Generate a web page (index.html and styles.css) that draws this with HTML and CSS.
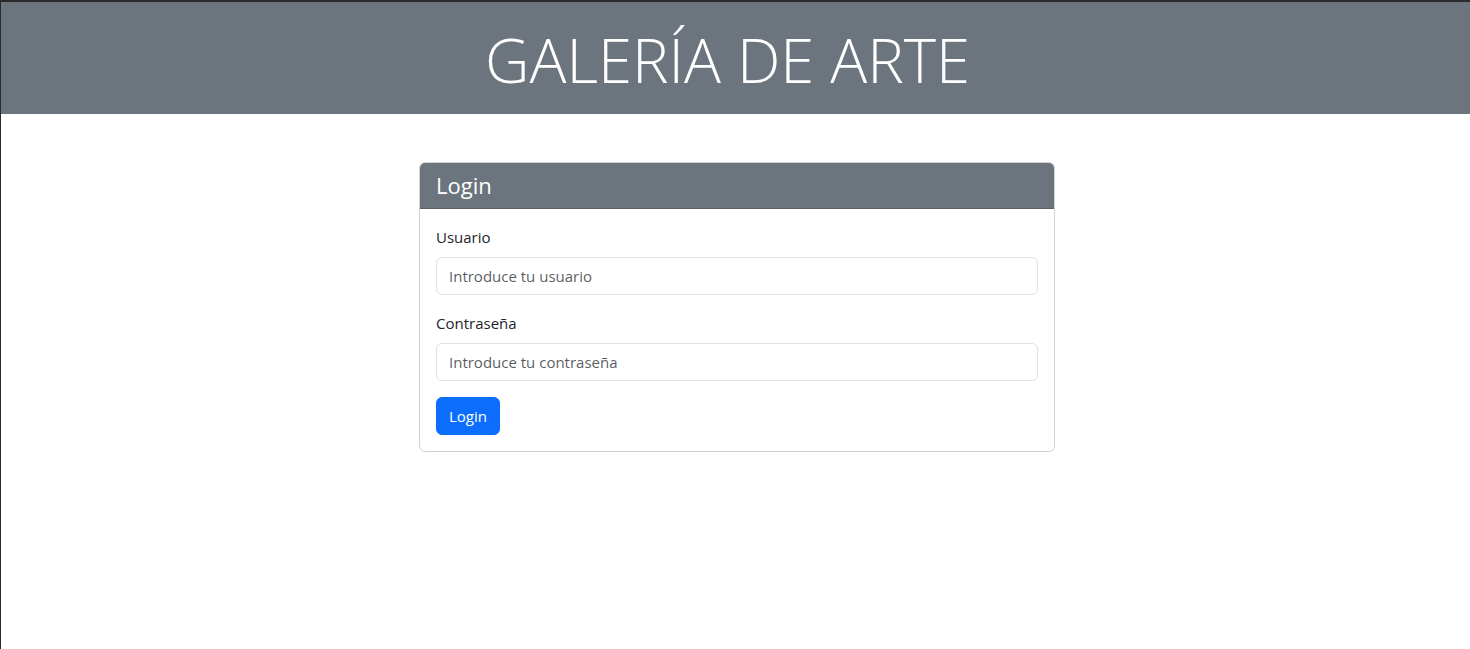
FILE: index.html
```html
<!DOCTYPE html>
<html lang="es">
<head>
<meta charset="utf-8">
<title>Galería de Arte</title>
<link rel="stylesheet" href="styles.css">
</head>
<body>
<div class="frame">
  <header class="banner">
    <h1 class="title">GALERÍA DE ARTE</h1>
  </header>
  <main class="main">
    <section class="card">
      <div class="card-header">
        <h3 class="card-title">Login</h3>
      </div>
      <form class="card-body">
        <div class="field">
          <label class="label" for="u">Usuario</label>
          <input class="input" id="u" type="text" placeholder="Introduce tu usuario">
        </div>
        <div class="field">
          <label class="label" for="p">Contraseña</label>
          <input class="input" id="p" type="password" placeholder="Introduce tu contraseña">
        </div>
        <button class="btn" type="button">Login</button>
      </form>
    </section>
  </main>
</div>
</body>
</html>
```
FILE: styles.css
```css
* { box-sizing: border-box; }
html, body { margin: 0; padding: 0; height: 100%; }
body {
  background: #2b2b2e;
  font-family: "Open Sans", "Liberation Sans", sans-serif;
  color: #212529;
}
.frame {
  margin: 2px 0 0 1px;
  background: #fff;
  height: calc(100% - 2px);
}
.banner {
  background: #6c757d;
  height: 112px;
  display: flex;
  align-items: center;
  justify-content: center;
  padding-right: 16px;
}
.title {
  margin: 0;
  color: #fff;
  font-weight: 300;
  font-size: 61.5px;
  line-height: 1;
  letter-spacing: 0;
  padding-top: 3px;
}
.main {
  display: flex;
  justify-content: center;
  padding: 48px 0 0 3px;
}
.card {
  width: 636px;
  border: 1px solid rgba(0,0,0,.175);
  border-radius: 6px;
  overflow: hidden;
}
.card-header {
  background: #6c757d;
  border-bottom: 1px solid rgba(0,0,0,.175);
  padding: 0 16px;
  height: 46px;
  display: flex;
  align-items: center;
}
.card-title {
  margin: 0;
  color: #fff;
  font-weight: 400;
  font-size: 22px;
  line-height: 1.2;
}
.card-body {
  padding: 16px;
  display: flex;
  flex-direction: column;
  align-items: flex-start;
}
.field {
  width: 100%;
  margin-bottom: 16px;
}
.label {
  display: block;
  font-size: 15px;
  line-height: 24px;
  margin-bottom: 8px;
}
.input {
  display: block;
  width: 100%;
  height: 38px;
  padding: 6px 12px;
  font-family: inherit;
  font-size: 15px;
  border: 1px solid #dee2e6;
  border-radius: 6px;
  background: #fff;
  color: #212529;
}
.input::placeholder { color: rgba(33,37,41,.75); }
.btn {
  height: 38px;
  padding: 0 12px;
  font-family: inherit;
  font-size: 15px;
  color: #fff;
  background: #0d6efd;
  border: 1px solid #0d6efd;
  border-radius: 6px;
}
```
